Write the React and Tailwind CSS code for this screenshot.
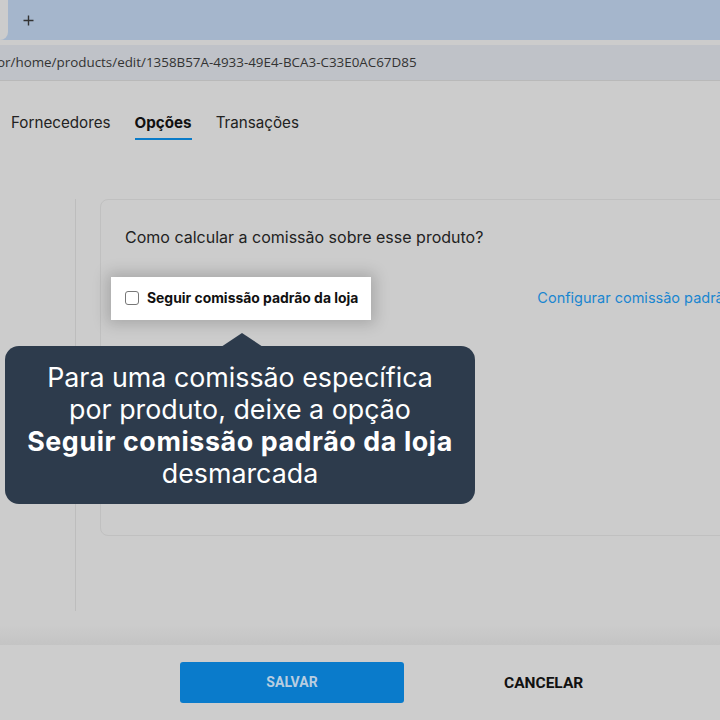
// Tela de edição de produto — aba Opções com dica sobre comissão
const App = () => {
  return (
    <div className="relative w-[720px] h-[720px] overflow-hidden bg-[#cccccc] font-['Inter',sans-serif]">
      {/* barra de abas do navegador */}
      <div className="flex h-[40px] bg-[#a5b6cc]">
        <div className="w-[8px] h-[40px] bg-[#cccccc] rounded-br-[10px]" />
        <div className="flex items-center pl-[15px]">
          <svg width="11" height="11" viewBox="0 0 11 11" className="text-[#333]">
            <path d="M5.5 0.5v10M0.5 5.5h10" stroke="currentColor" strokeWidth="1.4" />
          </svg>
        </div>
      </div>
      <div className="h-[5px] bg-[#cccccc]" />
      <div className="flex items-center h-[35px] bg-[#bfc2c8] text-[13.4px] text-[#333] font-['Open_Sans',sans-serif] -ml-[3px] whitespace-nowrap">
        or/home/products/edit/1358B57A-4933-49E4-BCA3-C33E0AC67D85
      </div>
      <div className="h-[6px] bg-[#cccccc] border-t border-[#b9b9b9]" />

      {/* abas do produto */}
      <div className="flex items-start pt-[26px] pl-[11px] gap-[24px] text-[15.2px] text-[#222]">
        <span>Fornecedores</span>
        <span className="flex flex-col font-bold text-[#111]">
          Opções
          <span className="mt-[3px] h-[2px] bg-[#0a7bc8]" />
        </span>
        <span>Transações</span>
      </div>

      <div className="flex mt-[59px]">
        <div className="shrink-0 w-[76px] h-[412px] border-r border-[#bdbdbd]" />
        <div className="shrink-0 ml-[24px] w-[700px] h-[337px] border border-[#c0c0c0] rounded-[8px] pl-[24px] pt-[25px]">
          <p className="text-[16px] text-[#222]">Como calcular a comissão sobre esse produto?</p>
          <div className="flex items-center mt-[28px]">
            <div className="shrink-0 -ml-[14px] flex items-center h-[43px] pl-[14px] pr-[13px] bg-white shadow-[0_0_14px_4px_rgba(0,0,0,0.18)]">
              <span className="w-[14px] h-[14px] border border-[#777] rounded-[3px] bg-white" />
              <span className="ml-[8px] text-[13.9px] font-bold text-[#111] whitespace-nowrap">Seguir comissão padrão da loja</span>
            </div>
            <span className="ml-[166px] text-[14.5px] text-[#1a86d0] whitespace-nowrap">Configurar comissão padrão</span>
          </div>
        </div>
      </div>

      {/* dica sobre a opção */}
      <div className="absolute left-[5px] top-[346px] w-[470px] h-[158px] rounded-[14px] bg-[#2d3b4c] flex flex-col items-center justify-center text-white text-[26.8px] leading-[32px] text-center">
        <div className="absolute left-[216px] -top-[13px] w-0 h-0 border-l-[21px] border-r-[21px] border-b-[14px] border-l-transparent border-r-transparent border-b-[#2d3b4c]" />
        <span>Para uma comissão específica</span>
        <span>por produto, deixe a opção</span>
        <span className="font-bold tracking-[0.6px]">Seguir comissão padrão da loja</span>
        <span>desmarcada</span>
      </div>

      {/* rodapé com ações */}
      <div className="absolute left-0 right-0 top-[625px] h-[20px] bg-gradient-to-b from-[#cccccc] to-[#c4c4c4]" />
      <div className="absolute left-0 right-0 top-[645px] bottom-0 bg-[#cdcdcd] flex items-start pt-[17px]">
        <button className="ml-[180px] w-[224px] h-[41px] rounded-[3px] bg-[#0a7bcb] text-[14px] font-bold text-[#b8cde0] font-['Roboto',sans-serif]">
          SALVAR
        </button>
        <button className="ml-[100px] mt-[10px] text-[15.5px] font-bold text-[#111] font-['Roboto',sans-serif]">
          CANCELAR
        </button>
      </div>
    </div>
  );
};

export default App;
